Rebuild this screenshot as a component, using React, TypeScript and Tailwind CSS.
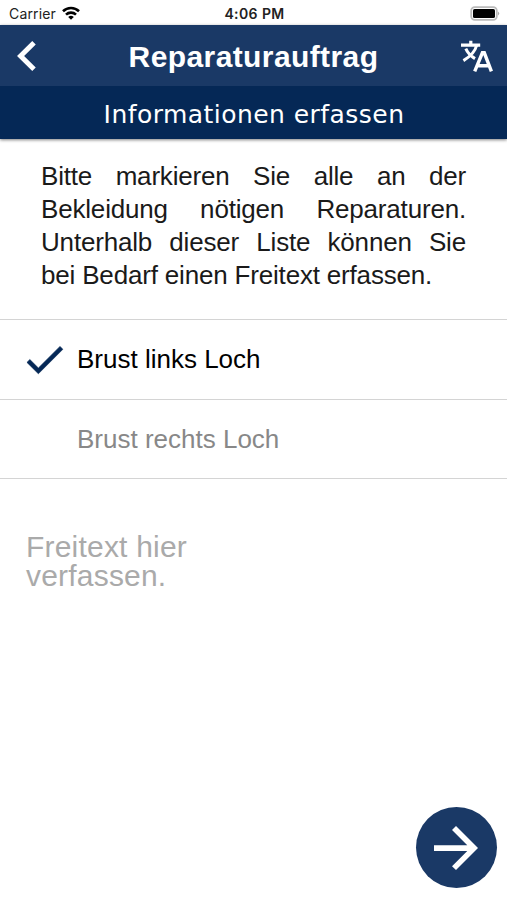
import React from 'react';

function StatusBar() {
  return (
    <div className="flex h-[25px] items-center pl-[9px] pr-[7px] font-['Inter','Roboto',sans-serif] text-[14px] text-[#222]">
      <div className="flex flex-1 items-center gap-[6px] pt-px">
        <span className="tracking-[0.15px]">Carrier</span>
        <svg className="mb-px h-[14px] w-[18px]" viewBox="0 0 18 14" fill="none" stroke="#000" strokeWidth="2.6">
          <path d="M1 5.2a11.5 11.5 0 0 1 16 0" />
          <path d="M4 8.6a7.2 7.2 0 0 1 10 0" />
          <path d="M9 13.8L6.2 11a4 4 0 0 1 5.6 0z" fill="#000" stroke="none" />
        </svg>
      </div>
      <span className="pt-px font-semibold tracking-[0.4px]">4:06 PM</span>
      <div className="flex flex-1 justify-end">
        <svg className="mt-px h-[15px] w-[30px]" viewBox="0 0 30 15">
          <rect x="1.2" y="1.2" width="25.6" height="12.6" rx="3.6" fill="#fff" stroke="#bbb" strokeWidth="1.8" />
          <rect x="3" y="3" width="22" height="9" rx="1.6" />
          <path d="M28 5.4q2.4 2.1 0 4.2z" fill="#aaa" />
        </svg>
      </div>
    </div>
  );
}

function TranslateIcon() {
  return (
    <svg className="h-[32px] w-[32px]" viewBox="0 0 32 32" fill="none" stroke="#fff" strokeWidth="3.2">
      <path d="M0 5.2h19.2M9.8 0.7v4" />
      <path d="M15.6 5.5C14.2 11.2 8.8 16.8 2.4 20.6M4.8 8.6c1.8 4.2 5 7.4 9.2 10" strokeWidth="3" />
      <path d="M13.7 31.3L21.4 12.8h1.9L30.4 31.3M16.6 25.8h11.6" strokeWidth="3.4" />
    </svg>
  );
}

export default function App() {
  return (
    <main className="flex h-[900px] w-[507px] flex-col bg-white font-['Liberation_Sans',sans-serif]">
      <StatusBar />
      <header className="text-white shadow-[0_1px_3px_rgba(0,0,0,0.5)]">
        <div className="flex h-[61px] items-center justify-between bg-[#1a3966] pl-[16px] pr-[14px]">
          <svg className="h-[30px] w-[32px]" viewBox="0 0 32 30" fill="none" stroke="#fff" strokeWidth="5">
            <path d="M18 1.8L4.6 15 18 28.2" />
          </svg>
          <h1 className="-ml-[2px] pt-px text-[30px] font-bold tracking-[0.4px]">
            Reparaturauftrag
          </h1>
          <TranslateIcon />
        </div>
        <h2 className="flex h-[53px] items-center justify-center bg-[#052856] pl-px pt-[4px] font-['DejaVu_Sans',sans-serif] text-[25px] tracking-[0.45px]">
          Informationen erfassen
        </h2>
      </header>
      <p className="h-[180px] pl-[41px] pr-[41px] pt-[21px] text-justify text-[26px] leading-[33px] tracking-[-0.18px] text-[#1a1a1a]">
        Bitte markieren Sie alle an der Bekleidung nötigen Reparaturen. Unterhalb dieser Liste können Sie bei Bedarf einen Freitext erfassen.
      </p>
      <ul className="text-[26px]">
        <li className="flex h-[80px] items-center border-t-[1.5px] border-[#d4d4d4] text-black">
          <span className="flex w-[77px] pl-[19.5px]">
            <svg className="h-[49px] w-[49px]" viewBox="0 0 24 24" fill="#052856" stroke="#052856" strokeWidth="0.3">
              <path d="M9 16.17L4.83 12l-1.42 1.41L9 19 21 7l-1.41-1.41z" />
            </svg>
          </span>
          <span>Brust links Loch</span>
        </li>
        <li className="flex h-[80px] items-center border-y border-[#d4d4d4] pl-[77px] text-[#888]">
          <span>Brust rechts Loch</span>
        </li>
      </ul>
      <p className="w-[230px] pl-[26px] pt-[53px] text-[30px] leading-[29px] tracking-[0.2px] text-[#aaa]">Freitext hier verfassen.</p>
      <div className="mt-auto flex justify-end pb-[12px] pr-[10px]">
        <button className="flex h-[81px] w-[81px] items-center justify-center rounded-full bg-[#1a3966]">
          <svg className="-ml-[2px] h-[66px] w-[66px]" viewBox="0 0 24 24" fill="#fff">
            <path d="M12 4l-1.45 1.45L16.1 11H4v2.1h12.1l-5.55 5.5L12 20l8-8z" />
          </svg>
        </button>
      </div>
    </main>
  );
}
